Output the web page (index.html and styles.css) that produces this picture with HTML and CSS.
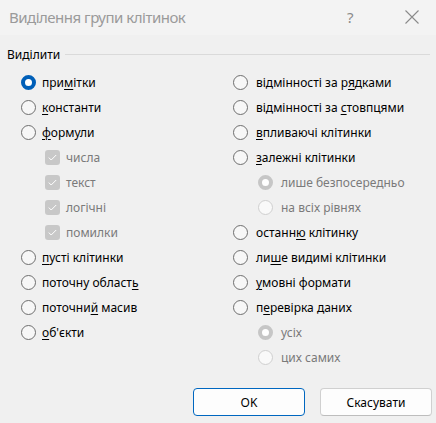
FILE: index.html
```html
<!DOCTYPE html>
<html lang="uk">
<head>
<meta charset="utf-8">
<title>Виділення групи клітинок</title>
<link rel="stylesheet" href="styles.css">
</head>
<body>
<div class="dialog">
  <div class="titlebar">
    <span class="title">Виділення групи клітинок</span>
    <span class="help">?</span>
    <span class="close"><svg width="14" height="14" viewBox="0 0 14 14"><path d="M0.5 0.5 L13.5 13.5 M13.5 0.5 L0.5 13.5" stroke="#8a8a8a" stroke-width="1.1" fill="none"/></svg></span>
  </div>
  <div class="group">
    <div class="legend"><span class="legend-text">Виділити</span><span class="legend-line"></span></div>
    <div class="columns">
      <div class="col">
        <div class="row"><span class="radio checked"></span><span class="label">при<u>м</u>ітки</span></div>
        <div class="row"><span class="radio"></span><span class="label"><u>к</u>онстанти</span></div>
        <div class="row"><span class="radio"></span><span class="label"><u>ф</u>ормули</span></div>
        <div class="row sub"><span class="check"><svg width="9" height="7" viewBox="0 0 9 7"><path d="M0.8 3.6 L3.2 6 L8.2 1" stroke="#fff" stroke-width="1" fill="none"/></svg></span><span class="label dis">числа</span></div>
        <div class="row sub"><span class="check"><svg width="9" height="7" viewBox="0 0 9 7"><path d="M0.8 3.6 L3.2 6 L8.2 1" stroke="#fff" stroke-width="1" fill="none"/></svg></span><span class="label dis">текст</span></div>
        <div class="row sub"><span class="check"><svg width="9" height="7" viewBox="0 0 9 7"><path d="M0.8 3.6 L3.2 6 L8.2 1" stroke="#fff" stroke-width="1" fill="none"/></svg></span><span class="label dis">логічні</span></div>
        <div class="row sub"><span class="check"><svg width="9" height="7" viewBox="0 0 9 7"><path d="M0.8 3.6 L3.2 6 L8.2 1" stroke="#fff" stroke-width="1" fill="none"/></svg></span><span class="label dis">помилки</span></div>
        <div class="row"><span class="radio"></span><span class="label"><u>п</u>усті клітинки</span></div>
        <div class="row"><span class="radio"></span><span class="label">поточну област<u>ь</u></span></div>
        <div class="row"><span class="radio"></span><span class="label">поточни<u>й</u> масив</span></div>
        <div class="row"><span class="radio"></span><span class="label"><u>о</u>б'єкти</span></div>
      </div>
      <div class="col">
        <div class="row"><span class="radio"></span><span class="label">відмінності за р<u>я</u>дками</span></div>
        <div class="row"><span class="radio"></span><span class="label">відмінності за <u>с</u>товпцями</span></div>
        <div class="row"><span class="radio"></span><span class="label"><u>в</u>пливаючі клітинки</span></div>
        <div class="row"><span class="radio"></span><span class="label"><u>з</u>алежні клітинки</span></div>
        <div class="row sub"><span class="radio dis-checked"></span><span class="label dis">лише безпосередньо</span></div>
        <div class="row sub"><span class="radio disabled"></span><span class="label dis">на всіх рівнях</span></div>
        <div class="row"><span class="radio"></span><span class="label">останн<u>ю</u> клітинку</span></div>
        <div class="row"><span class="radio"></span><span class="label">ли<u>ш</u>е видимі клітинки</span></div>
        <div class="row"><span class="radio"></span><span class="label"><u>у</u>мовні формати</span></div>
        <div class="row"><span class="radio"></span><span class="label">п<u>е</u>ревірка даних</span></div>
        <div class="row sub"><span class="radio dis-checked"></span><span class="label dis">усіх</span></div>
        <div class="row sub"><span class="radio disabled"></span><span class="label dis">цих самих</span></div>
      </div>
    </div>
  </div>
  <div class="buttons">
    <button class="btn default">OK</button>
    <button class="btn">Скасувати</button>
  </div>
</div>
</body>
</html>
```
FILE: styles.css
```css
html, body {
  margin: 0;
  padding: 0;
}
body {
  width: 436px;
  height: 423px;
  background: #f0f0f0;
  font-family: "Noto Sans", "Open Sans", sans-serif;
  font-size: 12px;
  color: #000;
  overflow: hidden;
}
.dialog {
  width: 436px;
  height: 423px;
  display: flex;
  flex-direction: column;
}
.titlebar {
  height: 35px;
  background: #f3f3f3;
  display: flex;
  align-items: center;
  padding-left: 9px;
  box-sizing: border-box;
}
.title {
  font-size: 15px;
  letter-spacing: -0.5px;
  color: #9a9a9a;
  flex: 1;
  margin-top: -2px;
}
.help {
  font-size: 15px;
  color: #8a8a8a;
  width: 10px;
  margin-right: 48px;
  margin-top: -2px;
}
.close {
  display: flex;
  width: 14px;
  height: 14px;
  margin-right: 17px;
  margin-top: -1px;
}
.group {
  padding-top: 10px;
}
.legend {
  display: flex;
  align-items: center;
  height: 18px;
  padding-left: 7px;
  padding-right: 6px;
}
.legend-text {
  margin-right: 5px;
}
.legend-line {
  flex: 1;
  border-top: 1px solid #dadada;
  margin-top: 1px;
}
.columns {
  display: grid;
  grid-template-columns: 212px 1fr;
  padding-left: 21px;
  padding-top: 7px;
}
.row {
  height: 25px;
  display: flex;
  align-items: center;
}
.row.sub {
  padding-left: 24px;
}
.col:last-child .row.sub {
  padding-left: 25px;
}
.radio {
  width: 15px;
  height: 15px;
  box-sizing: border-box;
  border: 1px solid #6e6e6e;
  border-radius: 50%;
  background: #f7f7f7;
  flex: none;
  margin-right: 6px;
}
.col:last-child .radio {
  margin-right: 8px;
}
.radio.checked {
  border: 4.5px solid #005fb8;
  background: #fff;
}
.radio.dis-checked {
  border: 4.5px solid #c6c6c6;
  background: #fff;
}
.radio.disabled {
  border-color: #cfcfcf;
  background: #f9f9f9;
}
.check {
  width: 15px;
  height: 15px;
  border-radius: 3px;
  background: #c8c8c8;
  flex: none;
  margin-right: 6px;
  display: flex;
  align-items: center;
  justify-content: center;
}
.label u {
  text-underline-offset: 2px;
}
.label.dis {
  color: #7a7a7a;
}
.buttons {
  display: flex;
  justify-content: flex-end;
  gap: 15px;
  padding-top: 18px;
  padding-right: 4px;
}
.btn {
  width: 112px;
  height: 28px;
  background: #fdfdfd;
  border: 1px solid #d0d0d0;
  border-bottom-color: #bdbdbd;
  border-radius: 4px;
  font-family: "Noto Sans", "Open Sans", sans-serif;
  font-size: 12px;
  color: #000;
  padding: 0;
}
.btn.default {
  border: 1.5px solid #0067c0;
}
```
